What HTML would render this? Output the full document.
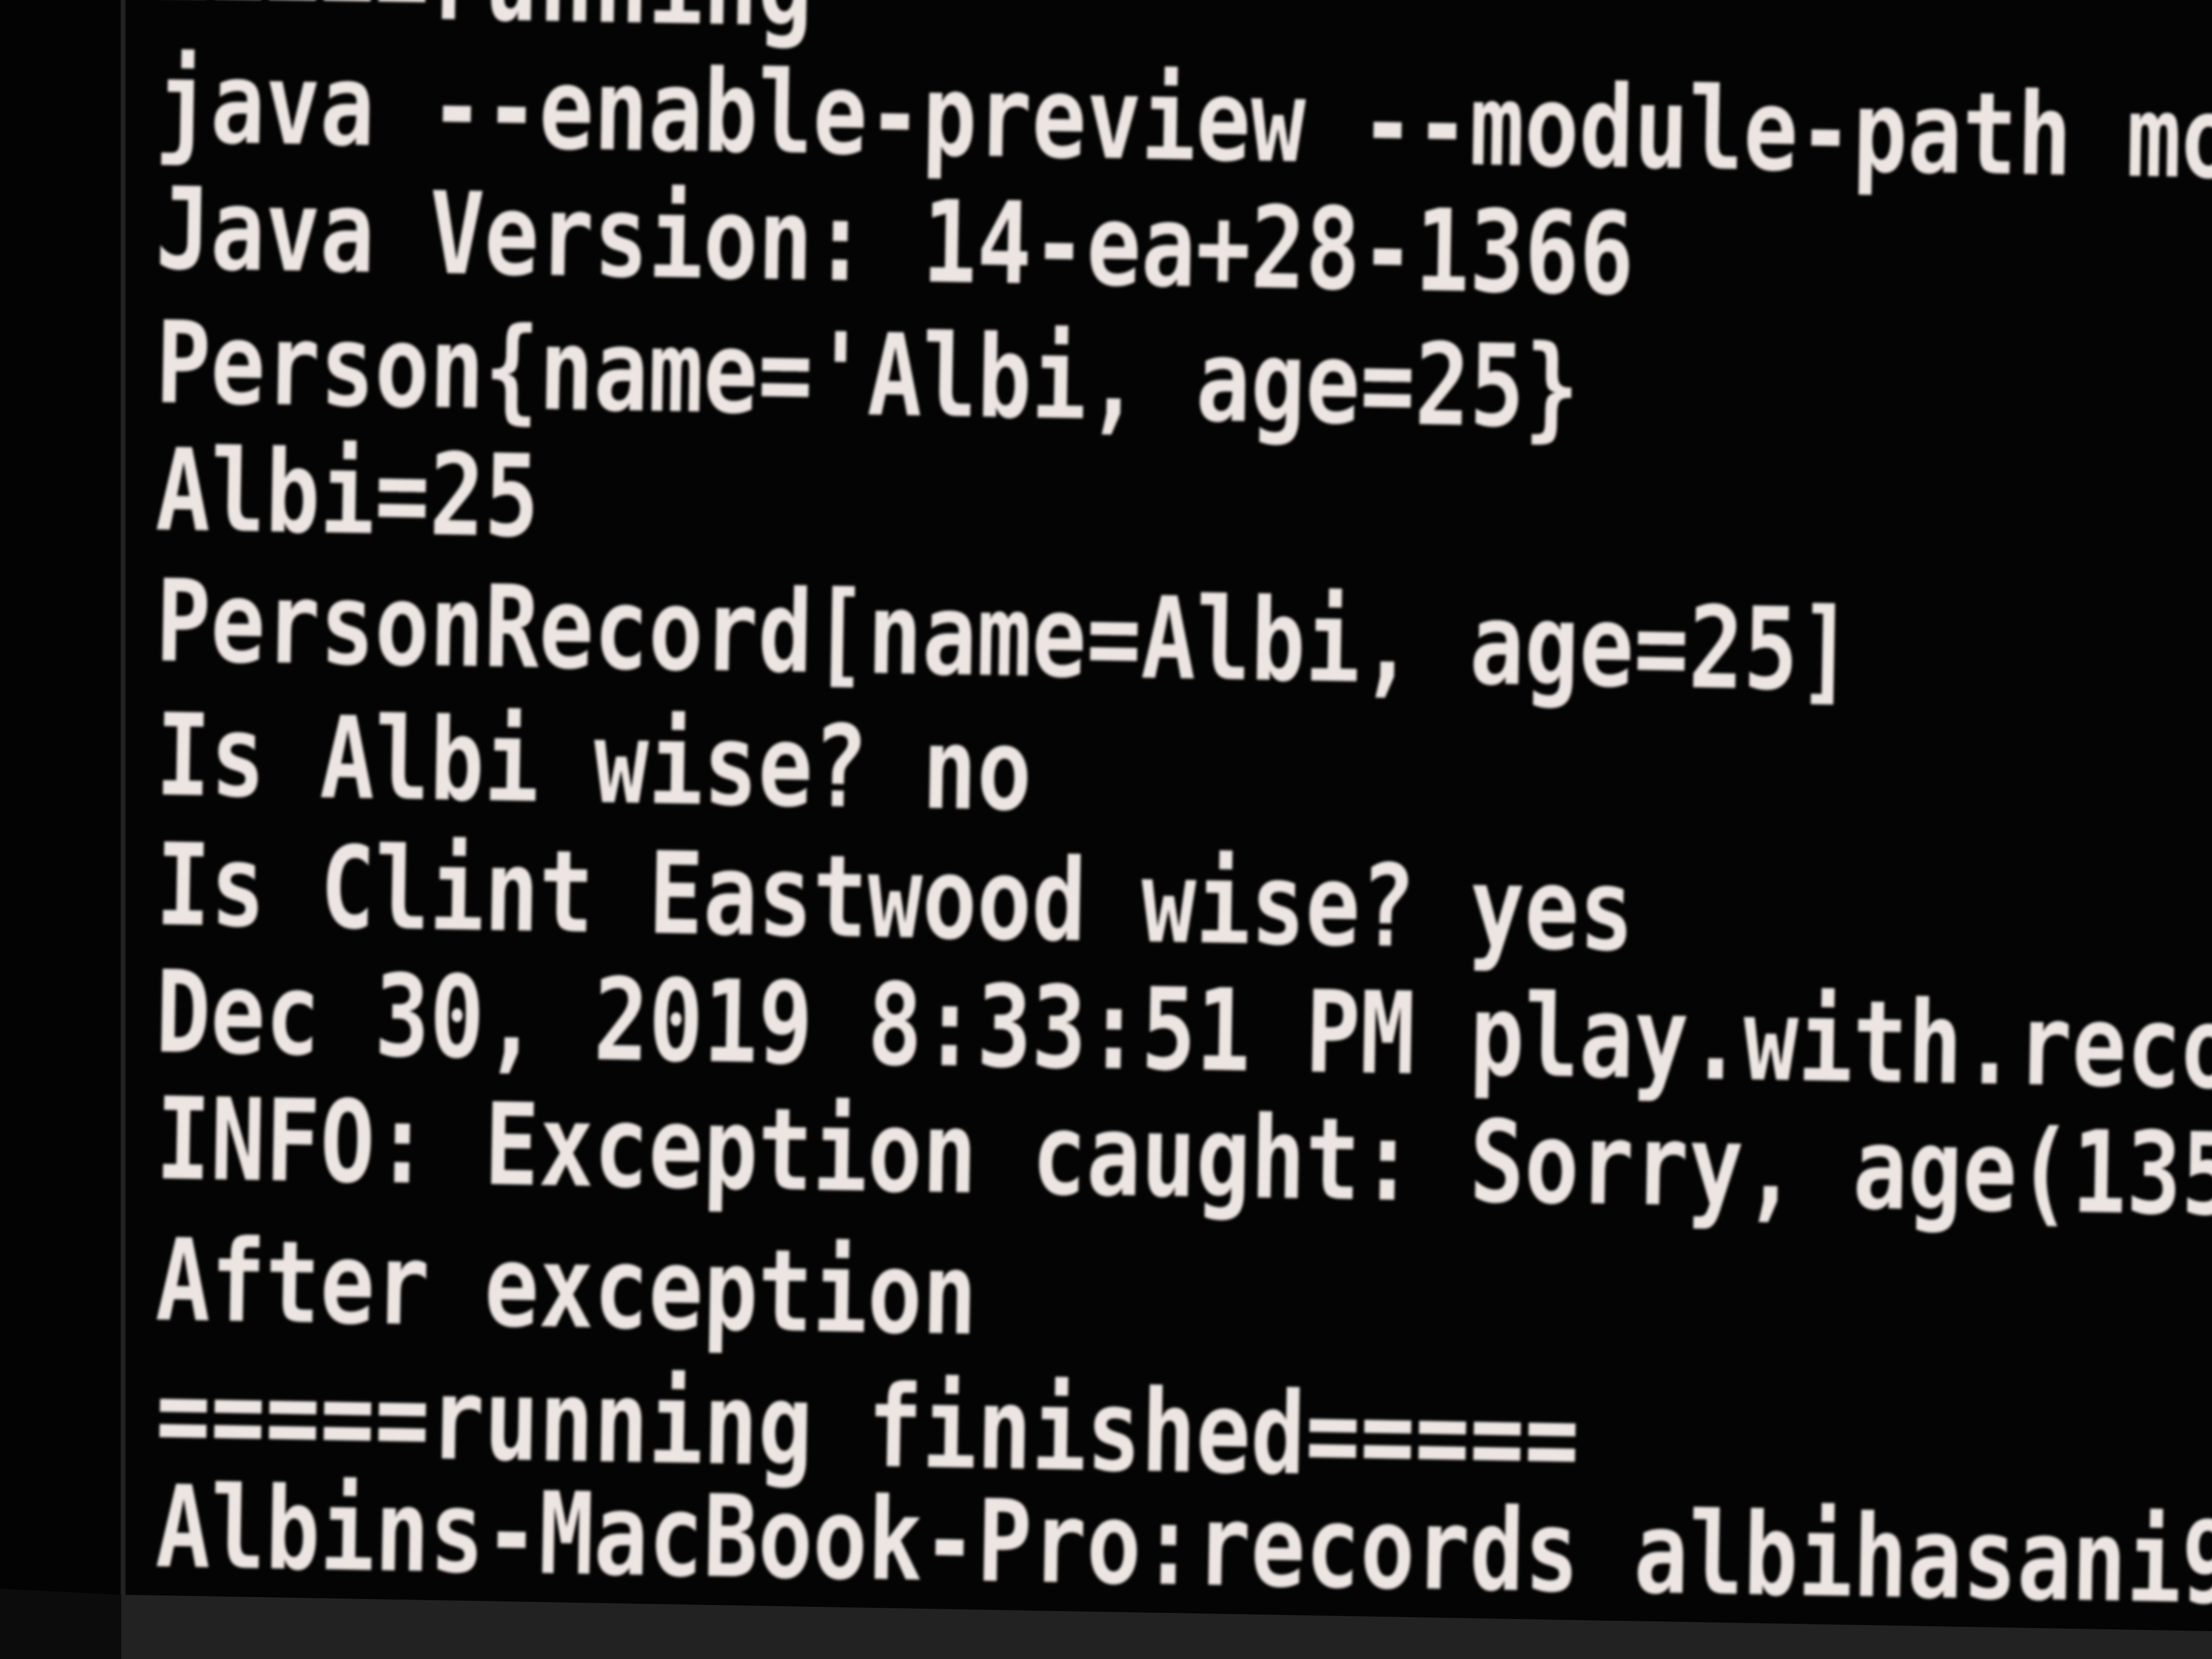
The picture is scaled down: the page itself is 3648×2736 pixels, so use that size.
<!DOCTYPE html>
<html><head><meta charset="utf-8"><style>
html,body{margin:0;padding:0;background:#040404;width:3648px;height:2736px;overflow:hidden}
svg{display:block}
text{font-family:"DejaVu Sans Mono","Liberation Mono",monospace;font-weight:bold;font-size:150px;fill:#ece5e2}
</style></head><body>
<svg width="3648" height="2736" viewBox="0 0 3648 2736" xmlns="http://www.w3.org/2000/svg">
<defs><filter id="b" x="-5%" y="-20%" width="110%" height="140%"><feGaussianBlur stdDeviation="2.5"/></filter></defs>
<rect x="0" y="0" width="3648" height="2736" fill="#040404"/>
<rect x="0" y="0" width="200" height="2736" fill="#030303"/>
<rect x="199" y="0" width="8" height="2736" fill="#222"/>
<polygon points="200,2630 3648,2690 3648,2736 200,2736" fill="#222"/>
<polygon points="0,2620 200,2630 200,2736 0,2736" fill="#0c0c0c"/>
<g filter="url(#b)">
<text transform="translate(256,23) rotate(1) scale(1,1.25)">=====running</text>
<text transform="translate(256,233) rotate(1) scale(1,1.25)">java --enable-preview --module-path mods</text>
<text transform="translate(256,442) rotate(1) scale(1,1.25)">Java Version: 14-ea+28-1366</text>
<text transform="translate(256,663) rotate(1) scale(1,1.25)">Person{name='Albi, age=25}</text>
<text transform="translate(256,873) rotate(1) scale(1,1.25)">Albi=25</text>
<text transform="translate(256,1089) rotate(1) scale(1,1.25)">PersonRecord[name=Albi, age=25]</text>
<text transform="translate(256,1310) rotate(1) scale(1,1.25)">Is Albi wise? no</text>
<text transform="translate(256,1524) rotate(1) scale(1,1.25)">Is Clint Eastwood wise? yes</text>
<text transform="translate(256,1734) rotate(1) scale(1,1.25)">Dec 30, 2019 8:33:51 PM play.with.records</text>
<text transform="translate(256,1943) rotate(1) scale(1,1.25)">INFO: Exception caught: Sorry, age(135)</text>
<text transform="translate(256,2176) rotate(1) scale(1,1.25)">After exception</text>
<text transform="translate(256,2397) rotate(1) scale(1,1.25)">=====running finished=====</text>
<text transform="translate(256,2583) rotate(1) scale(1,1.25)">Albins-MacBook-Pro:records albihasani9$</text>
</g>
</svg>
</body></html>
